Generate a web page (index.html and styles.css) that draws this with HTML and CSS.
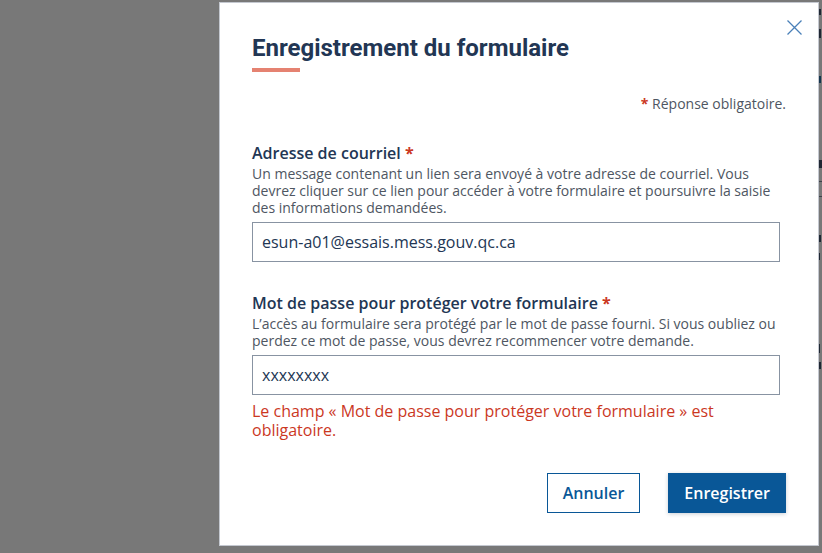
FILE: index.html
```html
<!DOCTYPE html>
<html lang="fr">
<head>
<meta charset="utf-8">
<title>Enregistrement du formulaire</title>
<link rel="stylesheet" href="styles.css">
</head>
<body>
<div class="page" aria-hidden="true">
  <div class="page-col">
    <span class="frag f1"></span>
    <span class="frag f2"></span>
    <span class="frag f3 link"></span>
    <span class="frag f4 link"></span>
    <span class="frag f5 bold"></span>
    <span class="rule r1"></span>
    <span class="rule r2"></span>
    <span class="frag f6"></span>
    <span class="frag f7"></span>
    <span class="frag f8"></span>
    <span class="frag f9"></span>
    <span class="frag f10"></span>
    <span class="frag f11"></span>
  </div>
</div>
<div class="overlay"></div>
<div class="modal" role="dialog" aria-labelledby="modal-title">
  <button class="close" type="button" aria-label="Fermer">
    <svg width="15" height="15" viewBox="0 0 15 15"><path d="M0.5 0.5 L14.5 14.5 M14.5 0.5 L0.5 14.5" stroke="#4a80b8" stroke-width="1.3" fill="none"/></svg>
  </button>
  <h2 class="title" id="modal-title">Enregistrement du formulaire</h2>
  <p class="required-note"><span class="star">*</span> Réponse obligatoire.</p>

  <div class="field">
    <label class="label" for="email">Adresse de courriel <span class="star">*</span></label>
    <p class="desc">Un message contenant un lien sera envoyé à votre adresse de courriel. Vous devrez cliquer sur ce lien pour accéder à votre formulaire et poursuivre la saisie des informations demandées.</p>
    <input class="input" id="email" type="text" value="esun-a01@essais.mess.gouv.qc.ca">
  </div>

  <div class="field field-2">
    <label class="label" for="pwd">Mot de passe pour protéger votre formulaire <span class="star">*</span></label>
    <p class="desc">L’accès au formulaire sera protégé par le mot de passe fourni. Si vous oubliez ou perdez ce mot de passe, vous devrez recommencer votre demande.</p>
    <input class="input" id="pwd" type="text" value="xxxxxxxx">
    <p class="error">Le champ « Mot de passe pour protéger votre formulaire » est obligatoire.</p>
  </div>

  <div class="actions">
    <button class="btn btn-secondary" type="button">Annuler</button>
    <button class="btn btn-primary" type="button">Enregistrer</button>
  </div>
</div>
</body>
</html>
```

FILE: styles.css
```css
* { box-sizing: border-box; }

html, body {
  margin: 0;
  padding: 0;
  width: 822px;
  height: 553px;
  overflow: hidden;
}

body {
  font-family: "Open Sans", "Noto Sans", sans-serif;
  background: #ffffff;
  position: relative;
}

/* page behind the dialog (only a sliver shows at the right edge) */
.page {
  position: absolute;
  inset: 0;
  background: #ffffff;
}
.page-col {
  position: absolute;
  left: 818px;
  top: 0;
  width: 4px;
  height: 553px;
}
.frag, .rule {
  position: absolute;
  left: 0;
  display: block;
  background: #223654;
}
.frag { width: 3px; height: 8px; }
.frag.link { background: #095797; }
.frag.bold { width: 4px; height: 8px; }
.rule { width: 4px; height: 1px; background: #6b778a; }
.f1 { top: 9px; height: 6px; }
.f2 { top: 29px; height: 9px; }
.f3 { top: 57px; height: 3px; width: 1px; }
.f4 { top: 76px; height: 7px; }
.f5 { top: 160px; }
.r1 { top: 181px; }
.r2 { top: 196px; }
.f6 { top: 212px; height: 9px; width: 1px; }
.f7 { top: 235px; height: 7px; }
.f8 { top: 253px; height: 7px; width: 2px; }
.f9 { top: 328px; height: 9px; width: 1px; }
.f10 { top: 344px; height: 9px; width: 2px; }
.f11 { top: 362px; height: 7px; }

.overlay {
  position: absolute;
  inset: 0;
  background: rgba(30, 30, 30, 0.6);
}

/* dialog */
.modal {
  position: absolute;
  left: 219px;
  top: 2px;
  width: 600px;
  height: 544px;
  background: #ffffff;
  border: 1px solid #c4c8d0;
  padding: 31px 32px 32px;
  color: #223654;
}

.close {
  position: absolute;
  top: 17px;
  right: 16px;
  width: 15px;
  height: 15px;
  padding: 0;
  border: 0;
  background: none;
  display: flex;
}

.title {
  margin: 0;
  font-family: Roboto, "Open Sans", sans-serif;
  font-weight: 700;
  font-size: 24px;
  line-height: 29px;
  color: #223654;
}
.title::after {
  content: "";
  display: block;
  width: 48px;
  height: 4px;
  margin-top: 5px;
  background: #e58271;
}

.required-note {
  margin: 22px 0 0;
  text-align: right;
  font-size: 14px;
  line-height: 20px;
  color: #4e5662;
}

.star {
  color: #cb381f;
  font-weight: 700;
}

.field {
  display: flex;
  flex-direction: column;
  margin-top: 27px;
}
.field-2 { margin-top: 29px; }

.label {
  font-size: 16px;
  font-weight: 600;
  line-height: 24px;
  color: #223654;
}

.desc {
  margin: 0;
  font-size: 14px;
  line-height: 17px;
  color: #4e5662;
}

.input {
  margin-top: 6px;
  width: 528px;
  height: 40px;
  border: 1px solid #8893a2;
  border-radius: 0;
  padding: 0 9px;
  font-family: "Open Sans", sans-serif;
  font-size: 16px;
  color: #223654;
  background: #ffffff;
  outline: none;
}

.error {
  margin: 7px 0 0;
  font-size: 16px;
  line-height: 19px;
  color: #cb381f;
}

.actions {
  display: flex;
  justify-content: flex-end;
  gap: 28px;
  margin-top: 33px;
}

.btn {
  height: 40px;
  padding: 0 15px;
  font-family: "Open Sans", sans-serif;
  font-size: 16px;
  font-weight: 600;
  border-radius: 0;
  cursor: pointer;
}
.btn-secondary {
  background: #ffffff;
  color: #095797;
  border: 1px solid #095797;
}
.btn-primary {
  background: #095797;
  color: #ffffff;
  border: 1px solid #095797;
  box-shadow: 0 1px 4px rgba(34, 54, 84, 0.24);
}
```
